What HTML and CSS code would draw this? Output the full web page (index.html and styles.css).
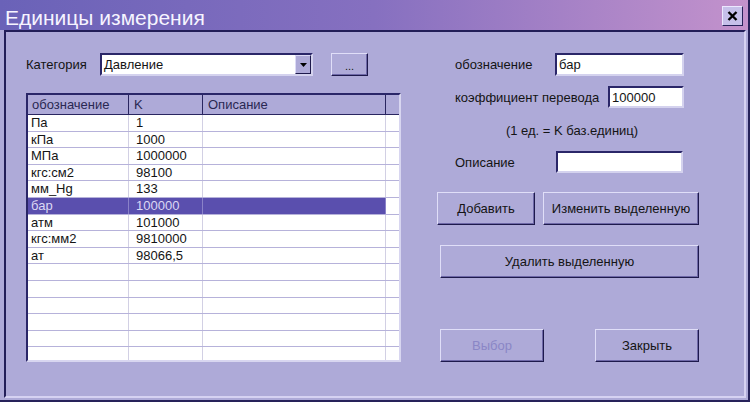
FILE: index.html
```html
<!DOCTYPE html>
<html lang="ru">
<head>
    <meta charset="UTF-8">
    <meta name="viewport" content="width=device-width, initial-scale=1.0">
    <title>Единицы измерения</title>
    <link rel="stylesheet" href="styles.css">
</head>
<body>

    <div class="window">
        <div class="titlebar">
            <span class="title">Единицы измерения</span>
            <button class="close-btn" type="button">
                <svg width="11" height="10" viewBox="0 0 11 10"><path d="M1.5 1 L9.5 9 M9.5 1 L1.5 9" stroke="#000" stroke-width="2.4" fill="none"/></svg>
            </button>
        </div>

        <div class="frame">
            <div class="left">
                <div class="category-row">
                    <label class="category-label">Категория</label>
                    <div class="combo">
                        <span>Давление</span>
                        <span class="combo-arrow">
                            <svg width="7" height="4" viewBox="0 0 7 4"><path d="M0 0 H7 L3.5 4 Z" fill="#000"/></svg>
                        </span>
                    </div>
                    <button class="btn btn-dots" type="button">...</button>
                </div>

                <div class="grid">
                    <div class="grid-head">
                        <div>обозначение</div>
                        <div>K</div>
                        <div>Описание</div>
                        <div></div>
                    </div>
                    <div class="grid-row"><div>Па</div><div>1</div><div></div><div></div></div>
                    <div class="grid-row"><div>кПа</div><div>1000</div><div></div><div></div></div>
                    <div class="grid-row"><div>МПа</div><div>1000000</div><div></div><div></div></div>
                    <div class="grid-row"><div>кгс:см2</div><div>98100</div><div></div><div></div></div>
                    <div class="grid-row"><div>мм_Hg</div><div>133</div><div></div><div></div></div>
                    <div class="grid-row selected"><div>бар</div><div>100000</div><div></div><div></div></div>
                    <div class="grid-row"><div>атм</div><div>101000</div><div></div><div></div></div>
                    <div class="grid-row"><div>кгс:мм2</div><div>9810000</div><div></div><div></div></div>
                    <div class="grid-row"><div>ат</div><div>98066,5</div><div></div><div></div></div>
                    <div class="grid-row"><div></div><div></div><div></div><div></div></div>
                    <div class="grid-row"><div></div><div></div><div></div><div></div></div>
                    <div class="grid-row"><div></div><div></div><div></div><div></div></div>
                    <div class="grid-row"><div></div><div></div><div></div><div></div></div>
                    <div class="grid-row"><div></div><div></div><div></div><div></div></div>
                    <div class="grid-row"><div></div><div></div><div></div><div></div></div>
                </div>
            </div>

            <div class="right">
                <div class="field field-name">
                    <label for="name">обозначение</label>
                    <input type="text" id="name" value="бар">
                </div>
                <div class="field field-factor">
                    <label for="factor">коэффициент перевода</label>
                    <input type="text" id="factor" value="100000">
                </div>
                <div class="hint">(1 ед. = K баз.единиц)</div>
                <div class="field field-desc">
                    <label for="desc">Описание</label>
                    <input type="text" id="desc" value="">
                </div>

                <div class="btn-row">
                    <button class="btn btn-add" type="button">Добавить</button>
                    <button class="btn btn-edit" type="button">Изменить выделенную</button>
                </div>
                <button class="btn btn-delete" type="button">Удалить выделенную</button>
                <div class="btn-row btn-row-bottom">
                    <button class="btn btn-small" type="button" disabled>Выбор</button>
                    <button class="btn btn-small" type="button">Закрыть</button>
                </div>
            </div>
        </div>
    </div>

</body>
</html>
```

FILE: styles.css
```css
/* CSS Reset */
* {
    box-sizing: border-box;
    margin: 0;
    padding: 0;
}

body {
    width: 750px;
    height: 402px;
    overflow: hidden;
    font-family: "Liberation Sans", Arial, sans-serif;
    font-size: 13px;
    color: #141414;
    background: #aeaad8;
}

.window {
    width: 750px;
    height: 402px;
    border-right: 2px solid #26225a;
    border-bottom: 2px solid #26225a;
    display: flex;
    flex-direction: column;
}

/* Title bar */
.titlebar {
    height: 30px;
    flex: none;
    display: flex;
    align-items: center;
    justify-content: space-between;
    padding: 0 5px;
    background: linear-gradient(90deg, #6a62b8 0%, #8670c0 50%, #c392cc 100%);
}

.title {
    margin-top: 5px;
    color: #f6f4ff;
    font-size: 21px;
}

.close-btn {
    width: 21px;
    height: 20px;
    margin-top: 2px;
    display: flex;
    align-items: center;
    justify-content: center;
    background: #c6c0ea;
    border: 1px solid;
    border-color: #ece8ff #26225a #26225a #ece8ff;
}

/* Client area */
.frame {
    flex: 1;
    margin: 0 2px 2px 4px;
    border: 2px solid;
    border-color: #221e58 #d6d2f2 #d6d2f2 #221e58;
    display: flex;
    padding: 21px 0 0 20px;
}

.left {
    width: 375px;
}

.category-row {
    display: flex;
    align-items: center;
    height: 23px;
}

.category-label {
    width: 74px;
}

.combo {
    width: 213px;
    height: 23px;
    display: flex;
    align-items: center;
    justify-content: space-between;
    padding-left: 2px;
    background: #fff;
    border: 2px solid;
    border-color: #2a2668 #d4d2ee #d4d2ee #2a2668;
}

.combo-arrow {
    width: 16px;
    height: 19px;
    display: flex;
    align-items: center;
    justify-content: center;
    background: #aeaad8;
    border: 1px solid;
    border-color: #dcdaf6 #1e1a4c #1e1a4c #dcdaf6;
}

/* Buttons */
.btn {
    font-family: inherit;
    font-size: 13px;
    color: #141414;
    background: #aeaad8;
    border: 1px solid;
    border-color: #e0def8 #1e1a4c #1e1a4c #e0def8;
    box-shadow: inset -1px -1px 0 #6e68a8;
    height: 33px;
}

.btn:disabled {
    color: #8a86c6;
}

.btn-dots {
    width: 37px;
    height: 23px;
    margin-left: 18px;
    font-size: 11px;
    padding-top: 3px;
}

/* Units grid */
.grid {
    margin-top: 17px;
    height: 269px;
    overflow: hidden;
    background: #fff;
    border: 2px solid;
    border-color: #2a2668 #d8d6f0 #d8d6f0 #2a2668;
}

.grid-head,
.grid-row {
    display: grid;
    grid-template-columns: 101px 74px 183px 13px;
}

.grid-head {
    height: 20px;
    background: #aeaad8;
    border-bottom: 1px solid #2a2660;
    color: #2a2852;
}

.grid-head div {
    line-height: 19px;
    border-right: 1px solid #2a2660;
    padding-left: 5px;
}

.grid-head div:first-child {
    padding-left: 4px;
}

.grid-head div:last-child {
    border-right: none;
}

.grid-row {
    height: 16.6px;
    border-bottom: 1px solid #b6b2da;
}

.grid-row div {
    line-height: 15.6px;
    border-right: 1px solid #d2d0e4;
    padding-left: 7px;
    white-space: nowrap;
}

.grid-row div:first-child {
    padding-left: 3px;
}

.grid-row div:last-child {
    border-right: none;
}

.grid-row.selected div:not(:last-child) {
    background: #5a4fae;
    color: #dcd8f4;
    border-right-color: #8a82c8;
}

/* Right side form */
.right {
    margin-left: 36px;
    width: 262px;
    display: flex;
    flex-direction: column;
}

.field {
    display: flex;
    align-items: center;
    padding-left: 18px;
}

.field input {
    height: 100%;
    font-family: inherit;
    font-size: 13px;
    color: #141414;
    padding-left: 2px;
    background: #fff;
    border: 2px solid;
    border-color: #2a2668 #d4d2ee #d4d2ee #2a2668;
    outline: none;
}

.field-name {
    height: 23px;
}

.field-name label {
    width: 100px;
}

.field-name input {
    width: 129px;
}

.field-factor {
    height: 22px;
    margin-top: 10px;
}

.field-factor label {
    width: 153px;
}

.field-factor input {
    width: 76px;
}

.hint {
    margin-top: 14px;
    height: 18px;
    line-height: 18px;
    text-align: center;
    padding-left: 8px;
}

.field-desc {
    height: 22px;
    margin-top: 11px;
}

.field-desc label {
    width: 101px;
}

.field-desc input {
    width: 127px;
}

.btn-row {
    display: flex;
    gap: 8px;
    margin-top: 19px;
}

.btn-add {
    width: 98px;
}

.btn-edit {
    width: 156px;
}

.btn-delete {
    width: 259px;
    margin: 20px 0 0 3px;
}

.btn-row-bottom {
    gap: 51px;
    margin: 51px 0 0 3px;
}

.btn-small {
    width: 104px;
}
```
